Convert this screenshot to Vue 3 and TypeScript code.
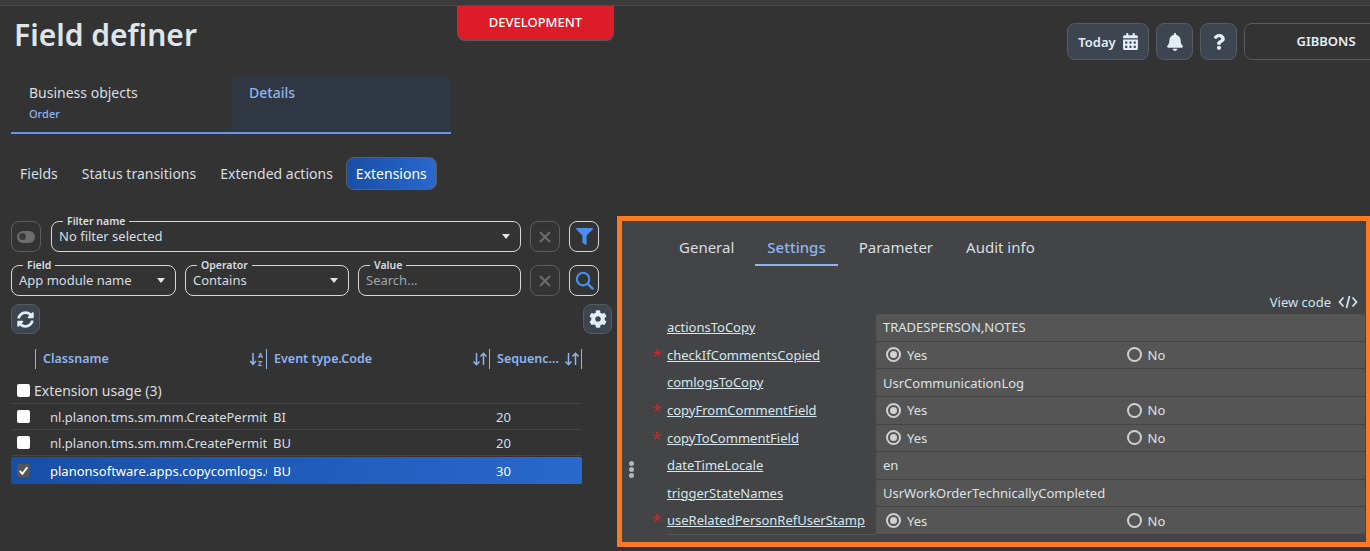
<script setup lang="ts">
const subTabs = ["Fields", "Status transitions", "Extended actions", "Extensions"];
const panelTabs = ["General", "Settings", "Parameter", "Audit info"];

const rows = [
  { name: "nl.planon.tms.sm.mm.CreatePermitForWorkOrder", type: "BI", seq: 20, checked: false },
  { name: "nl.planon.tms.sm.mm.CreatePermitForWorkOrder", type: "BU", seq: 20, checked: false },
  { name: "planonsoftware.apps.copycomlogs.CopyComlogs", type: "BU", seq: 30, checked: true },
];

const settings = [
  { key: "actionsToCopy", value: "TRADESPERSON,NOTES", required: false },
  { key: "checkIfCommentsCopied", required: true },
  { key: "comlogsToCopy", value: "UsrCommunicationLog", required: false },
  { key: "copyFromCommentField", required: true },
  { key: "copyToCommentField", required: true },
  { key: "dateTimeLocale", value: "en", required: false },
  { key: "triggerStateNames", value: "UsrWorkOrderTechnicallyCompleted", required: false },
  { key: "useRelatedPersonRefUserStamp", required: true },
];
</script>

<template>
  <div class="app">
    <div class="strip"></div>
    <div class="dev-badge">DEVELOPMENT</div>

    <header class="head">
      <h1 class="title">Field definer</h1>
      <div class="actions">
        <button class="tool today">
          Today
          <svg viewBox="0 0 448 512" width="15" height="17"><path fill="currentColor" d="M0 464c0 26.5 21.5 48 48 48h352c26.5 0 48-21.5 48-48V192H0v272zm320-196c0-6.6 5.4-12 12-12h40c6.6 0 12 5.4 12 12v40c0 6.6-5.4 12-12 12h-40c-6.6 0-12-5.4-12-12v-40zm0 128c0-6.6 5.4-12 12-12h40c6.6 0 12 5.4 12 12v40c0 6.6-5.4 12-12 12h-40c-6.6 0-12-5.4-12-12v-40zM192 268c0-6.6 5.4-12 12-12h40c6.6 0 12 5.4 12 12v40c0 6.6-5.4 12-12 12h-40c-6.6 0-12-5.4-12-12v-40zm0 128c0-6.6 5.4-12 12-12h40c6.6 0 12 5.4 12 12v40c0 6.6-5.4 12-12 12h-40c-6.6 0-12-5.4-12-12v-40zM64 268c0-6.6 5.4-12 12-12h40c6.6 0 12 5.4 12 12v40c0 6.6-5.4 12-12 12H76c-6.6 0-12-5.4-12-12v-40zm0 128c0-6.6 5.4-12 12-12h40c6.6 0 12 5.4 12 12v40c0 6.6-5.4 12-12 12H76c-6.6 0-12-5.4-12-12v-40zM400 64h-48V16c0-8.8-7.2-16-16-16h-32c-8.8 0-16 7.2-16 16v48H160V16c0-8.8-7.2-16-16-16h-32c-8.8 0-16 7.2-16 16v48H48C21.5 64 0 85.5 0 112v48h448v-48c0-26.5-21.5-48-48-48z"/></svg>
        </button>
        <button class="tool square">
          <svg viewBox="0 0 448 512" width="16" height="18"><path fill="currentColor" d="M224 512c35.32 0 63.97-28.65 63.97-64H160.03c0 35.35 28.65 64 63.97 64zm215.39-149.71c-19.32-20.76-55.47-51.99-55.47-154.29 0-77.7-54.48-139.9-127.94-155.16V32c0-17.67-14.32-32-31.98-32s-31.98 14.33-31.98 32v20.84C118.56 68.1 64.08 130.3 64.08 208c0 102.3-36.15 133.53-55.47 154.29-6 6.45-8.66 14.16-8.61 21.71.11 16.4 12.98 32 32.1 32h383.8c19.12 0 32-15.6 32.1-32 .05-7.55-2.61-15.27-8.61-21.71z"/></svg>
        </button>
        <button class="tool square">
          <svg viewBox="0 0 384 512" width="12" height="16"><path fill="currentColor" d="M202.021 0C122.202 0 70.503 32.703 29.914 91.026c-7.363 10.58-5.093 25.086 5.178 32.874l43.138 32.709c10.373 7.865 25.132 6.026 33.253-4.148 25.049-31.381 43.63-49.449 82.757-49.449 30.764 0 68.816 19.799 68.816 49.631 0 22.552-18.617 34.134-48.993 51.164-35.423 19.86-82.299 44.576-82.299 106.405V320c0 13.255 10.745 24 24 24h72.471c13.255 0 24-10.745 24-24v-5.773c0-42.86 125.268-44.645 125.268-160.627C377.504 66.256 286.902 0 202.021 0zM192 373.459c-38.196 0-69.271 31.075-69.271 69.271 0 38.195 31.075 69.27 69.271 69.27s69.271-31.075 69.271-69.271-31.075-69.27-69.271-69.27z"/></svg>
        </button>
        <div class="user">GIBBONS</div>
      </div>
    </header>

    <div class="workspace">
      <section class="left">
        <div class="crumbs">
          <div class="crumb">
            <div class="crumb-title">Business objects</div>
            <div class="crumb-sub">Order</div>
          </div>
          <div class="crumb active">
            <div class="crumb-title">Details</div>
          </div>
        </div>

        <nav class="subtabs">
          <span v-for="t in subTabs" :key="t" class="subtab" :class="{ on: t === 'Extensions' }">{{ t }}</span>
        </nav>

        <div class="filters">
          <div class="filter-row">
            <button class="ghost toggle"><span class="pill"><span class="knob"></span></span></button>
            <div class="field grow">
              <label>Filter name</label>
              <span class="field-value">No filter selected</span>
              <span class="caret"></span>
            </div>
            <button class="ghost times">
              <svg viewBox="0 0 14 14" width="14" height="14"><path d="M2 2l10 10M12 2L2 12" stroke="currentColor" stroke-width="2.2" fill="none"/></svg>
            </button>
            <button class="ghost bright">
              <svg viewBox="0 0 512 512" width="17" height="17"><path fill="#4a8ef0" d="M487.976 0H24.028C2.71 0-8.047 25.866 7.058 40.971L192 225.941V432c0 7.831 3.821 15.17 10.237 19.662l80 55.98C298.02 518.69 320 507.493 320 487.98V225.941l184.947-184.97C520.021 25.896 509.338 0 487.976 0z"/></svg>
            </button>
          </div>
          <div class="filter-row">
            <div class="field w-field">
              <label>Field</label>
              <span class="field-value">App module name</span>
              <span class="caret"></span>
            </div>
            <div class="field w-op">
              <label>Operator</label>
              <span class="field-value">Contains</span>
              <span class="caret"></span>
            </div>
            <div class="field grow">
              <label>Value</label>
              <span class="field-value dim">Search...</span>
            </div>
            <button class="ghost times">
              <svg viewBox="0 0 14 14" width="14" height="14"><path d="M2 2l10 10M12 2L2 12" stroke="currentColor" stroke-width="2.2" fill="none"/></svg>
            </button>
            <button class="ghost bright">
              <svg viewBox="0 0 20 20" width="19" height="19"><circle cx="8.5" cy="8.5" r="6.6" fill="none" stroke="#4a8ef0" stroke-width="2.2"/><path d="M13.5 13.5l5 5" stroke="#4a8ef0" stroke-width="2.6" stroke-linecap="round"/></svg>
            </button>
          </div>
        </div>

        <div class="table-tools">
          <button class="tool small">
            <svg viewBox="0 0 512 512" width="17" height="17"><path fill="currentColor" d="M370.72 133.28C339.458 104.008 298.888 87.962 255.848 88c-77.458.068-144.328 53.178-162.791 126.85-1.344 5.363-6.122 9.15-11.651 9.15H24.103c-7.498 0-13.194-6.807-11.807-14.176C33.933 94.924 134.813 8 256 8c66.448 0 126.791 26.136 171.315 68.685L463.03 40.97C478.149 25.851 504 36.559 504 57.941V192c0 13.255-10.745 24-24 24H345.941c-21.382 0-32.09-25.851-16.971-40.971l41.75-41.749zM32 296h134.059c21.382 0 32.09 25.851 16.971 40.971l-41.75 41.75c31.262 29.273 71.835 45.319 114.876 45.28 77.418-.07 144.315-53.144 162.787-126.849 1.344-5.363 6.122-9.15 11.651-9.15h57.304c7.498 0 13.194 6.807 11.807 14.176C478.067 417.076 377.187 504 256 504c-66.448 0-126.791-26.136-171.315-68.685L48.97 471.03C33.851 486.149 8 475.441 8 454.059V320c0-13.255 10.745-24 24-24z"/></svg>
          </button>
          <button class="tool small">
            <svg viewBox="0 0 512 512" width="18" height="18"><path fill="currentColor" d="M487.4 315.7l-42.6-24.6c4.3-23.2 4.3-47 0-70.2l42.6-24.6c4.9-2.8 7.1-8.6 5.5-14-11.1-35.6-30-67.8-54.7-94.6-3.8-4.1-10-5.1-14.8-2.3L380.8 110c-17.9-15.4-38.5-27.3-60.8-35.1V25.8c0-5.6-3.9-10.5-9.4-11.7-36.7-8.2-74.3-7.8-109.2 0-5.5 1.2-9.4 6.1-9.4 11.7V75c-22.2 7.9-42.8 19.8-60.8 35.1L88.7 85.5c-4.9-2.8-11-1.9-14.8 2.3-24.7 26.7-43.6 58.9-54.7 94.6-1.7 5.4.6 11.2 5.5 14L67.3 221c-4.3 23.2-4.3 47 0 70.2l-42.6 24.6c-4.9 2.8-7.1 8.6-5.5 14 11.1 35.6 30 67.8 54.7 94.6 3.8 4.1 10 5.1 14.8 2.3l42.6-24.6c17.9 15.4 38.5 27.3 60.8 35.1v49.2c0 5.6 3.9 10.5 9.4 11.7 36.7 8.2 74.3 7.8 109.2 0 5.5-1.2 9.4-6.1 9.4-11.7v-49.2c22.2-7.9 42.8-19.8 60.8-35.1l42.6 24.6c4.9 2.8 11 1.9 14.8-2.3 24.7-26.7 43.6-58.9 54.7-94.6 1.5-5.5-.7-11.3-5.6-14.1zM256 336c-44.1 0-80-35.9-80-80s35.9-80 80-80 80 35.9 80 80-35.9 80-80 80z"/></svg>
          </button>
        </div>

        <div class="grid-head">
          <span class="col-check"></span>
          <span class="col">
            Classname
            <svg class="sort" viewBox="0 0 16 16" width="16" height="16">
              <path d="M4 2v11M1.2 10l2.8 3.4L6.800 10" fill="none" stroke="currentColor" stroke-width="1.5"/>
              <text x="9" y="7" font-size="7" font-weight="700" fill="currentColor">A</text>
              <text x="9" y="15" font-size="7" font-weight="700" fill="currentColor">Z</text>
            </svg>
          </span>
          <span class="col">
            Event type.Code
            <svg class="sort" viewBox="0 0 16 16" width="16" height="16"><path d="M4.500 2v11.500M1.500 10.500l3 3.200 3-3.200M11.500 14V2.500M8.500 5.500l3-3.200 3 3.200" fill="none" stroke="currentColor" stroke-width="1.5"/></svg>
          </span>
          <span class="col">
            Sequenc...
            <svg class="sort" viewBox="0 0 16 16" width="16" height="16"><path d="M4.500 2v11.500M1.500 10.500l3 3.200 3-3.200M11.500 14V2.500M8.500 5.500l3-3.200 3 3.200" fill="none" stroke="currentColor" stroke-width="1.5"/></svg>
          </span>
        </div>

        <div class="group">
          <span class="check"></span>
          Extension usage (3)
        </div>
        <div v-for="(r, i) in rows" :key="i" class="grid-row" :class="{ selected: r.checked }">
          <span class="cell-check">
            <span class="check" :class="{ ticked: r.checked }">
              <svg v-if="r.checked" viewBox="0 0 12 12" width="13" height="13"><path d="M2.500 6.500l2.500 2.500 4.500-6" fill="none" stroke="#fff" stroke-width="1.800"/></svg>
            </span>
          </span>
          <span class="cell name">{{ r.name }}</span>
          <span class="cell">{{ r.type }}</span>
          <span class="cell">{{ r.seq }}</span>
        </div>
      </section>

      <section class="panel">
        <span class="dots"><i></i><i></i><i></i></span>
        <nav class="panel-tabs">
          <span v-for="t in panelTabs" :key="t" class="panel-tab" :class="{ on: t === 'Settings' }">{{ t }}</span>
        </nav>
        <div class="view-code">
          View code
          <svg viewBox="0 0 20 14" width="20" height="14"><path d="M5.500 2.500L1.500 7l4 4.500M14.500 2.500l4 4.500-4 4.500M11.500 1L8.500 13" fill="none" stroke="currentColor" stroke-width="1.800"/></svg>
        </div>
        <div class="settings">
          <div v-for="s in settings" :key="s.key" class="setting">
            <div class="setting-label">
              <span v-if="s.required" class="star">*</span>
              <a>{{ s.key }}</a>
            </div>
            <div v-if="s.value" class="setting-value">{{ s.value }}</div>
            <div v-else class="setting-value radios">
              <span class="radio-item"><span class="radio on"></span>Yes</span>
              <span class="radio-item"><span class="radio"></span>No</span>
            </div>
          </div>
        </div>
      </section>
    </div>
  </div>
</template>

<style>
html,
body {
  margin: 0;
  background: #333;
}
</style>

<style scoped>
.app {
  position: relative;
  width: 1370px;
  height: 551px;
  overflow: hidden;
  background: #333;
  color: #d8dee2;
  font-family: "Noto Sans", "Open Sans", sans-serif;
  font-size: 13px;
}
button {
  font-family: inherit;
  padding: 0;
  cursor: pointer;
}
.strip {
  height: 5px;
  background: #3b3b3b;
  border-bottom: 1px solid #4b4b4b;
}
.dev-badge {
  position: absolute;
  left: 457px;
  top: 6px;
  width: 155px;
  height: 34px;
  background: #dc1c28;
  border: 1px solid #5a5a5a;
  border-top: 0;
  border-radius: 0 0 8px 8px;
  color: #fff;
  font-size: 13px;
  font-weight: 500;
  line-height: 32px;
  text-align: center;
}

.head {
  display: flex;
  justify-content: space-between;
  height: 70px;
}
.title {
  margin: 9px 0 0 14px;
  font-size: 30px;
  font-weight: 600;
  line-height: 40px;
  color: #dfe5ea;
}
.actions {
  display: flex;
  gap: 7px;
  margin-top: 17px;
  height: 37px;
}
.tool {
  display: flex;
  align-items: center;
  justify-content: center;
  background: #3c4550;
  border: 1px solid #565b60;
  border-radius: 8px;
  color: #e3edf5;
}
.today {
  width: 82px;
  gap: 7px;
  font-size: 13px;
  font-weight: 600;
}
.square {
  width: 37px;
}
.user {
  width: 130px;
  margin-right: -22px;
  border: 1px solid #565b60;
  border-radius: 8px;
  color: #e3edf5;
  font-size: 13px;
  font-weight: 600;
  line-height: 35px;
  text-align: center;
  white-space: nowrap;
  padding-left: 16px;
}

.workspace {
  display: grid;
  grid-template-columns: 617px 753px;
}
.left {
  min-width: 0;
}
.crumbs {
  display: flex;
  height: 58px;
  width: 440px;
  margin-left: 11px;
  border-bottom: 2px solid #6497e8;
  box-sizing: border-box;
  height: 58px;
}
.crumb {
  width: 220px;
  padding: 7px 18px;
  box-sizing: border-box;
}
.crumb.active {
  background: #2f3743;
  border-radius: 6px 6px 0 0;
}
.crumb-title {
  font-size: 14px;
  line-height: 20px;
}
.crumb.active .crumb-title {
  color: #8fb4ee;
  font-weight: 500;
}
.crumb-sub {
  margin-top: 3px;
  color: #8fb4ee;
  font-size: 11px;
  font-weight: 500;
  line-height: 16px;
}

.subtabs {
  display: flex;
  margin: 23px 0 0 11px;
  height: 33px;
  gap: 6px;
}
.subtab {
  padding: 0 9px;
  font-size: 14px;
  line-height: 33px;
}
.subtab.on {
  margin-left: -2px;
  background: linear-gradient(90deg, #184ea6, #2a68cc);
  border: 1px solid #5a5f66;
  border-radius: 8px;
  line-height: 31px;
  color: #fff;
}

.filters {
  display: flex;
  flex-direction: column;
  gap: 13px;
  width: 588px;
  margin: 31px 0 0 11px;
}
.filter-row {
  display: flex;
  gap: 9px;
  height: 31px;
}
.field {
  position: relative;
  display: flex;
  align-items: center;
  justify-content: space-between;
  box-sizing: border-box;
  padding: 0 10px 0 7px;
  border: 1px solid #d6d6d6;
  border-radius: 8px;
}
.field label {
  position: absolute;
  top: -8px;
  left: 11px;
  padding: 0 4px;
  background: #333;
  font-size: 10.500px;
  font-weight: 600;
  line-height: 14px;
}
.grow {
  flex: 1;
}
.w-field {
  width: 165px;
}
.w-op {
  width: 164px;
}
.field-value {
  line-height: 29px;
}
.dim {
  color: #a2a6a9;
}
.caret {
  width: 0;
  height: 0;
  border-left: 4.500px solid transparent;
  border-right: 4.500px solid transparent;
  border-top: 5px solid #e4e4e4;
}
.ghost {
  display: flex;
  align-items: center;
  justify-content: center;
  width: 30px;
  background: transparent;
  border: 1px solid #5d5d5d;
  border-radius: 8px;
  color: #6b6b6b;
}
.bright {
  border-color: #d6d6d6;
}
.toggle {
  flex: none;
  margin-right: 1px;
}
.pill {
  display: flex;
  align-items: center;
  width: 18px;
  height: 12px;
  padding-left: 2px;
  box-sizing: border-box;
  border-radius: 6px;
  background: #6d6d6d;
}
.knob {
  width: 7px;
  height: 7px;
  border-radius: 50%;
  background: #3a3a3a;
}

.table-tools {
  display: flex;
  justify-content: space-between;
  width: 601px;
  margin: 8px 0 0 11px;
}
.small {
  width: 29px;
  height: 30px;
}

.grid-head {
  display: grid;
  grid-template-columns: 24px 231px 223px 93px;
  margin: 15px 0 0 11px;
  height: 20px;
  color: #8fb4ee;
  font-weight: 600;
  font-size: 12.500px;
  line-height: 20px;
}
.col {
  position: relative;
  display: flex;
  align-items: center;
  justify-content: space-between;
  padding: 0 1px 0 7px;
  border-left: 1px solid #8fb4ee;
  white-space: nowrap;
}
.col:first-of-type {
  padding-left: 14px;
}
.col:last-child {
  border-right: 1px solid #8fb4ee;
  padding-right: 1px;
}
.sort {
  flex: none;
}
.group {
  display: flex;
  align-items: center;
  gap: 4px;
  height: 27px;
  margin: 8px 0 0 11px;
  width: 571px;
  padding-left: 6px;
  box-sizing: border-box;
  border-bottom: 1px solid #454545;
  font-size: 14px;
}
.check {
  display: flex;
  align-items: center;
  justify-content: center;
  width: 13px;
  height: 13px;
  background: #fff;
  border-radius: 2px;
  flex: none;
}
.ticked {
  background: #555;
}
.grid-row {
  display: grid;
  grid-template-columns: 39px 223px 223px 86px;
  align-items: center;
  width: 571px;
  height: 26px;
  margin-left: 11px;
  border-bottom: 1px solid #454545;
  box-sizing: border-box;
}
.cell-check {
  padding-left: 6px;
}
.cell {
  font-size: 13px;
  padding-left: 0;
  overflow: hidden;
  white-space: nowrap;
}
.name {
  margin-right: 6px;
}
.grid-row .cell:nth-child(3),
.grid-row .cell:nth-child(4) {
  padding-left: 0;
}
.selected {
  height: 27px;
  margin-top: 1px;
  border: 0;
  border-radius: 2px;
  background: linear-gradient(90deg, #184ea6, #2a68cc);
  color: #fff;
}

.panel {
  position: relative;
  box-sizing: border-box;
  height: 331px;
  margin-top: 140px;
  border: 5px solid #f97a22;
  border-right-width: 4px;
  background: #434445;
}
.dots {
  position: absolute;
  left: 7px;
  top: 240px;
  display: flex;
  flex-direction: column;
  gap: 1px;
}
.dots i {
  width: 5px;
  height: 5px;
  border-radius: 50%;
  background: #b5b5b5;
}
.panel-tabs {
  display: flex;
  gap: 9px;
  margin: 14px 0 0 45px;
  height: 31px;
}
.panel-tab {
  padding: 0 12px;
  box-sizing: border-box;
  font-size: 15px;
  line-height: 25px;
}
.panel-tab.on {
  border-bottom: 2px solid #8fb4ee;
  color: #8fb4ee;
  font-weight: 500;
}
.view-code {
  display: flex;
  align-items: center;
  justify-content: flex-end;
  gap: 7px;
  height: 20px;
  margin-top: 26px;
  padding-right: 8px;
  color: #cfe3f0;
  font-size: 13px;
}
.settings {
  margin: 2px 0 0 45px;
}
.setting {
  display: grid;
  grid-template-columns: 209px 1fr;
  height: 27.630px;
  margin-right: 1px;
}
.setting-label {
  position: relative;
  line-height: 27px;
  color: #d6e6ef;
}
.setting-label a {
  text-decoration: underline;
}
.setting:last-child .setting-label {
  border-bottom: 1px solid #555;
}
.star {
  position: absolute;
  left: -15px;
  top: -1px;
  color: #c8262a;
  font-size: 17px;
}
.setting-value {
  display: flex;
  align-items: center;
  margin-bottom: 1px;
  padding-left: 7px;
  background: #555;
  border-radius: 2px;
  color: #dce2e6;
}
.radios {
  display: grid;
  grid-template-columns: 240.500px 1fr;
  padding-left: 10px;
}
.radio-item {
  display: flex;
  align-items: center;
  gap: 6px;
}
.radio {
  position: relative;
  box-sizing: border-box;
  width: 15px;
  height: 15px;
  border: 2px solid #d0d0d0;
  border-radius: 50%;
}
.radio.on::after {
  content: "";
  position: absolute;
  inset: 2px;
  border-radius: 50%;
  background: #d0d0d0;
}
</style>
